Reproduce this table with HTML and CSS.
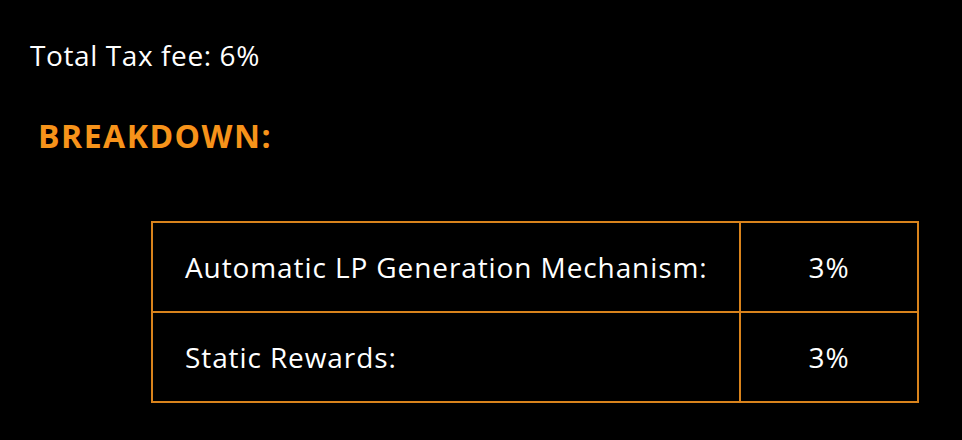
FILE: index.html
```html
<!DOCTYPE html>
<html>
<head>
<meta charset="utf-8">
<link rel="stylesheet" href="styles.css">
</head>
<body>
<div class="page">
  <p class="total">Total Tax fee: 6%</p>
  <h2 class="breakdown">BREAKDOWN:</h2>
  <table class="fees">
    <colgroup>
      <col class="col-label">
      <col class="col-value">
    </colgroup>
    <tr>
      <td class="label">Automatic LP Generation Mechanism:</td>
      <td class="value">3%</td>
    </tr>
    <tr>
      <td class="label">Static Rewards:</td>
      <td class="value">3%</td>
    </tr>
  </table>
</div>
</body>
</html>
```
FILE: styles.css
```css
html, body {
  margin: 0;
  padding: 0;
  background: #000;
}
.page {
  width: 962px;
  height: 440px;
  padding: 37px 0 0 30px;
  box-sizing: border-box;
  font-family: "Open Sans", sans-serif;
  color: #fff;
}
.total {
  margin: 0;
  font-size: 28px;
  line-height: 36px;
  letter-spacing: 0.6px;
}
.breakdown {
  margin: 45px 0 0 8px;
  font-size: 32px;
  line-height: 36px;
  font-weight: 700;
  letter-spacing: 1.5px;
  color: #f7931a;
}
.fees {
  margin: 67px 0 0 121px;
  border-collapse: collapse;
  table-layout: fixed;
  width: 768px;
}
.col-label {
  width: 588px;
}
.fees td {
  border: 2px solid #d9831c;
  height: 88px;
  padding: 0;
  font-size: 28px;
  letter-spacing: 0.9px;
}
.label {
  padding-left: 32px !important;
}
.value {
  text-align: center;
}
```
